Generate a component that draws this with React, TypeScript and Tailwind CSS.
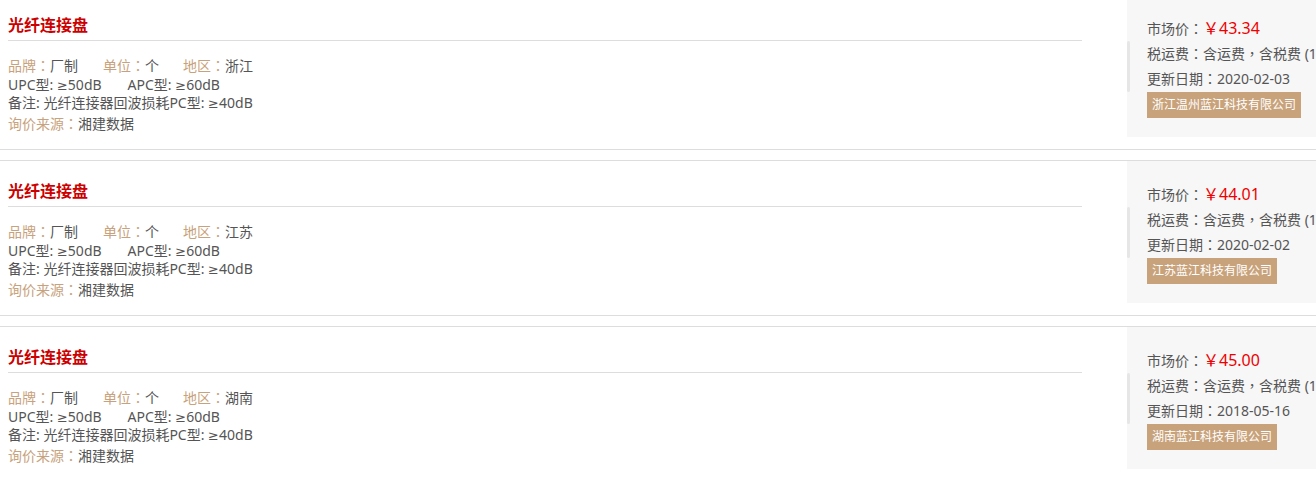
import React from "react";

const items = [
  { region: "浙江", price: "43.34", date: "2020-02-03", company: "浙江温州蓝江科技有限公司" },
  { region: "江苏", price: "44.01", date: "2020-02-02", company: "江苏蓝江科技有限公司" },
  { region: "湖南", price: "45.00", date: "2018-05-16", company: "湖南蓝江科技有限公司" },
];

const font = { fontFamily: '"Noto Sans", "Noto Sans CJK SC", sans-serif' };

function P({ c }: { c: string }) {
  return <span className="font-['Noto_Sans_CJK_TC',sans-serif] leading-[0px]">{c}</span>;
}

function Ge() {
  return <span className="font-['DejaVu_Sans',sans-serif] text-[13px] leading-[0px]">≥</span>;
}

function Item({ region, price, date, company }: (typeof items)[number]) {
  return (
    <div className="flex border-t border-b border-[#dddddd] h-[156px]">
      <div className="w-[1074px] ml-[8px] shrink-0">
        <div className="pt-[15px] leading-[30px] h-[46px] border-b border-[#dddddd] text-[16px] font-bold text-[#cc0000]">
          光纤连接盘
        </div>
        <div className="mt-[16px] text-[14px] leading-[18.5px] text-[#555555]">
          <div>
            <span className="mr-[25px]">
              <span className="text-[#c8a27c]">
                品牌<P c="：" />
              </span>
              厂制
            </span>
            <span className="mr-[24px]">
              <span className="text-[#c8a27c]">
                单位<P c="：" />
              </span>
              个
            </span>
            <span>
              <span className="text-[#c8a27c]">
                地区<P c="：" />
              </span>
              {region}
            </span>
          </div>
          <div>
            <span className="mr-[26px]">
              UPC型: <Ge />
              50dB
            </span>
            <span>
              APC型: <Ge />
              60dB
            </span>
          </div>
          <div>
            备注: 光纤连接器回波损耗PC型: <Ge />
            40dB
          </div>
          <div className="mt-[2px]">
            <span className="text-[#c8a27c]">
              询价来源<P c="：" />
            </span>
            湘建数据
          </div>
        </div>
      </div>
      <div className="ml-[45px] w-[220px] shrink-0 h-[142px] bg-[#f7f7f7] flex">
        <div className="w-[3px] h-[51px] mt-[46px] rounded-full bg-[#e6e6e6] shrink-0" />
        <div className="ml-[17px] pt-[21px] text-[14px] leading-[25px] text-[#555555] whitespace-nowrap">
          <div>
            市场价<P c="：" />
            <span className="text-[16px] text-[#ee0000]">￥{price}</span>
          </div>
          <div>
            税运费<P c="：" />
            含运费<P c="，" />
            含税费 (10%)
          </div>
          <div>
            更新日期<P c="：" />
            {date}
          </div>
          <div className="inline-block bg-[#c8a27a] text-white text-[12px] leading-[26px] px-[5px]">
            {company}
          </div>
        </div>
      </div>
    </div>
  );
}

export default function App() {
  return (
    <div className="w-[1316px] h-[477px] overflow-hidden bg-white" style={font}>
      <div className="-mt-[6px] flex flex-col gap-[10px]">
        {items.map((it) => (
          <Item key={it.region} {...it} />
        ))}
      </div>
    </div>
  );
}
